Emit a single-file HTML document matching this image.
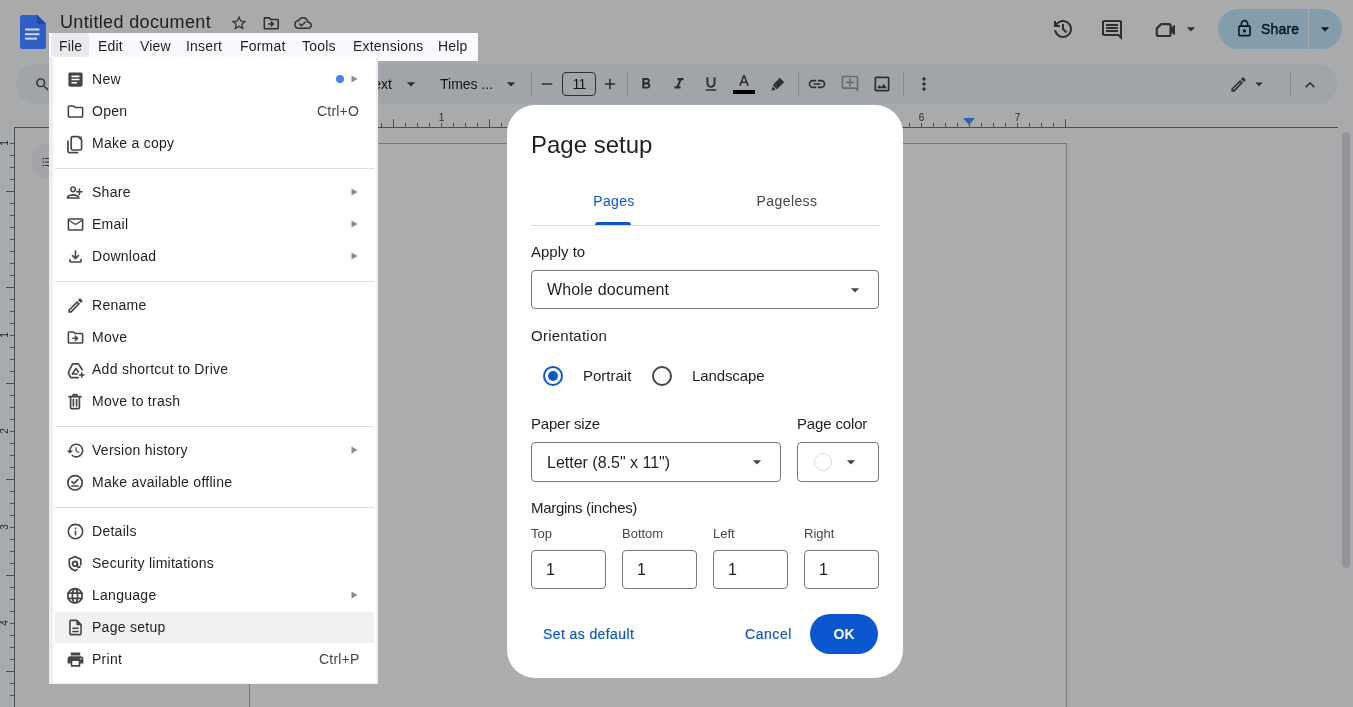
<!DOCTYPE html>
<html><head><meta charset="utf-8"><style>
*{margin:0;padding:0;box-sizing:border-box}
html,body{width:1353px;height:707px;overflow:hidden}
body{background:#f9fbfd;font-family:"Liberation Sans", sans-serif;position:relative}
.t{position:absolute;line-height:1;white-space:nowrap;will-change:transform}
.ic{position:absolute;display:block}
.abs{position:absolute}
</style></head><body>
<div class="t" style="left:60px;top:12.76px;font-size:18px;color:#303030;letter-spacing:0.35px;">Untitled document</div>
<svg class="ic" style="left:230px;top:13.5px;width:18px;height:18px;" viewBox="0 0 24 24"><path fill="#444746" d="M22 9.24l-7.19-.62L12 2 9.19 8.63 2 9.24l5.46 4.73L5.82 21 12 17.27 18.18 21l-1.63-7.03L22 9.24zM12 15.4l-3.76 2.27 1-4.28-3.32-2.88 4.38-.38L12 6.1l1.71 4.04 4.38.38-3.32 2.88 1 4.28L12 15.4z"/></svg>
<svg class="ic" style="left:262px;top:14px;width:18.5px;height:18.5px;" viewBox="0 0 24 24"><path fill="#444746" d="M20 6h-8l-2-2H4c-1.1 0-1.99.9-1.99 2L2 18c0 1.1.9 2 2 2h16c1.1 0 2-.9 2-2V8c0-1.1-.9-2-2-2zm0 12H4V6h5.17l2 2H20v10zm-7.84-6H8v2h4.16l-1.59 1.59L11.99 17 16 13.01 11.99 9l-1.41 1.41L12.16 12z"/></svg>
<svg class="ic" style="left:294px;top:13.8px;width:18px;height:18px;" viewBox="0 0 24 24"><path fill="#444746" d="M19.35 10.04C18.67 6.59 15.64 4 12 4 9.11 4 6.6 5.64 5.35 8.04 2.34 8.36 0 10.91 0 14c0 3.31 2.69 6 6 6h13c2.76 0 5-2.24 5-5 0-2.64-2.05-4.78-4.65-4.96zM19 18H6c-2.21 0-4-1.79-4-4 0-2.05 1.53-3.76 3.56-3.97l1.07-.11.5-.95C8.08 7.14 9.94 6 12 6c2.62 0 4.88 1.86 5.39 4.43l.3 1.5 1.53.11c1.56.1 2.78 1.41 2.78 2.96 0 1.65-1.35 3-3 3zm-9-3.82l-2.09-2.09L6.5 13.5 10 17l6.01-6.01-1.41-1.41z"/></svg>
<svg class="ic" style="left:1050.5px;top:16.5px;width:24px;height:24px" viewBox="0 -960 960 960"><path fill="#444746" d="M480-120q-138 0-240.5-91.5T122-440h82q14 104 92.5 172T480-200q117 0 198.5-81.5T760-480q0-117-81.5-198.5T480-760q-69 0-129 32t-101 88h110v80H120v-240h80v94q51-64 124.5-99T480-840q75 0 140.5 28.5t114 77q48.5 48.5 77 114T840-480q0 75-28.5 140.5t-77 114q-48.5 48.5-114 77T480-120Zm112-192L440-464v-216h80v184l128 128-56 56Z"/></svg>
<svg class="ic" style="left:1100px;top:18px;width:24px;height:24px;" viewBox="0 0 24 24"><path fill="#444746" d="M22 4c0-1.1-.9-2-2-2H4c-1.1 0-2 .9-2 2v12c0 1.1.9 2 2 2h14l4 4V4zm-2 13.17L18.83 16H4V4h16v13.17zM6 12h12v2H6zm0-3h12v2H6zm0-3h12v2H6z"/></svg>
<svg class="ic" style="left:1153px;top:17px;width:26px;height:26px" viewBox="0 0 24 24"><path fill="none" stroke="#444746" stroke-width="2" stroke-linejoin="round" d="M7.6 6.5H14.8Q16.2 6.5 16.2 7.9V16.1Q16.2 17.5 14.8 17.5H4.9Q3.5 17.5 3.5 16.1V10.6Z"/><path fill="#444746" d="M16 10.2L20.3 7.2V16.8L16 13.8Z"/></svg>
<svg class="ic" style="left:1181px;top:19px;width:20px;height:20px;" viewBox="0 0 24 24"><path fill="#444746" d="M7 10l5 5 5-5z"/></svg>
<div class="abs" style="left:1218px;top:9px;width:124px;height:40px;border-radius:20px;background:#c2e7ff"></div>
<div class="abs" style="left:1308px;top:9px;width:1px;height:40px;background:#f9fbfd"></div>
<svg class="ic" style="left:1234.5px;top:19px;width:19px;height:19px;" viewBox="0 0 24 24"><path fill="#0a2236" d="M18 8h-1V6c0-2.76-2.24-5-5-5S7 3.24 7 6v2H6c-1.1 0-2 .9-2 2v10c0 1.1.9 2 2 2h12c1.1 0 2-.9 2-2V10c0-1.1-.9-2-2-2zM9 6c0-1.66 1.34-3 3-3s3 1.34 3 3v2H9V6zm9 14H6V10h12v10zm-6-3c1.1 0 2-.9 2-2s-.9-2-2-2-2 .9-2 2 .9 2 2 2z"/></svg>
<div class="t" style="left:1261px;top:22.15px;font-size:14px;color:#0a2236;-webkit-text-stroke:0.45px #0a2236;letter-spacing:0.2px;">Share</div>
<svg class="ic" style="left:1315px;top:19px;width:20px;height:20px;" viewBox="0 0 24 24"><path fill="#001d35" d="M7 10l5 5 5-5z"/></svg>
<div class="abs" style="left:16px;top:63.5px;width:1321px;height:40px;border-radius:20px;background:#edf2f8"></div>
<svg class="ic" style="left:34.2px;top:76px;width:17px;height:17px;" viewBox="0 0 24 24"><path fill="#444746" d="M15.5 14h-.79l-.28-.27C15.41 12.59 16 11.11 16 9.5 16 5.91 13.09 3 9.5 3S3 5.91 3 9.5 5.91 16 9.5 16c1.61 0 3.09-.59 4.23-1.57l.27.28v.79l5 4.99L20.49 19l-4.99-5zm-6 0C7.01 14 5 11.99 5 9.5S7.01 5 9.5 5 14 7.01 14 9.5 11.99 14 9.5 14z"/></svg>
<div class="t" style="left:392px;top:77.15px;font-size:14px;color:#1f1f1f;transform:translateX(-100%);">ext</div>
<svg class="ic" style="left:401px;top:74px;width:20px;height:20px;" viewBox="0 0 24 24"><path fill="#444746" d="M7 10l5 5 5-5z"/></svg>
<div class="t" style="left:440px;top:77.15px;font-size:14px;color:#1f1f1f;">Times ...</div>
<svg class="ic" style="left:501px;top:74px;width:20px;height:20px;" viewBox="0 0 24 24"><path fill="#444746" d="M7 10l5 5 5-5z"/></svg>
<div class="abs" style="left:531px;top:72px;width:1px;height:24px;background:#c7c7c7"></div>
<svg class="ic" style="left:538px;top:75px;width:18px;height:18px;" viewBox="0 0 24 24"><path fill="#444746" d="M19 13H5v-2h14v2z"/></svg>
<div class="abs" style="left:562px;top:72px;width:34px;height:24px;border:1px solid #444746;border-radius:4px"></div>
<div class="t" style="left:579px;transform:translateX(-50%);top:77.15px;font-size:14px;color:#1f1f1f;letter-spacing:-0.8px;">11</div>
<svg class="ic" style="left:601px;top:75px;width:18px;height:18px;" viewBox="0 0 24 24"><path fill="#444746" d="M19 13h-6v6h-2v-6H5v-2h6V5h2v6h6v2z"/></svg>
<div class="abs" style="left:627px;top:72px;width:1px;height:24px;background:#c7c7c7"></div>
<svg class="ic" style="left:637px;top:75px;width:18px;height:18px;" viewBox="0 0 24 24"><path fill="#444746" d="M15.6 10.79c.97-.67 1.65-1.77 1.65-2.79 0-2.26-1.75-4-4-4H7v14h7.04c2.09 0 3.71-1.7 3.71-3.79 0-1.52-.86-2.82-2.15-3.42zM10 6.5h3c.83 0 1.5.67 1.5 1.5s-.67 1.5-1.5 1.5h-3v-3zm3.5 9H10v-3h3.5c.83 0 1.5.67 1.5 1.5s-.67 1.5-1.5 1.5z"/></svg>
<svg class="ic" style="left:670px;top:75px;width:18px;height:18px;" viewBox="0 0 24 24"><path fill="#444746" d="M10 4v3h2.21l-3.42 8H6v3h8v-3h-2.21l3.42-8H18V4z"/></svg>
<svg class="ic" style="left:702px;top:75px;width:18px;height:18px;" viewBox="0 0 24 24"><path fill="#444746" d="M12 17c3.31 0 6-2.69 6-6V3h-2.5v8c0 1.93-1.57 3.5-3.5 3.5S8.5 12.93 8.5 11V3H6v8c0 3.31 2.69 6 6 6zm-7 2v2h14v-2H5z"/></svg>
<svg class="ic" style="left:735px;top:73px;width:18px;height:18px;" viewBox="0 0 24 24"><path fill="#444746" d="M5.49 17h2.42l1.27-3.58h5.65L16.09 17h2.42L13.25 3h-2.5L5.49 17zm4.42-5.61l2.03-5.79h.12l2.03 5.79H9.91z"/></svg>
<div class="abs" style="left:733px;top:90px;width:22px;height:4px;background:#000"></div>
<svg class="ic" style="left:768px;top:74px;width:20px;height:20px" viewBox="0 0 24 24"><path fill="#444746" d="M14.2 4.6L19.4 9.8L12.6 16.6L7.4 11.4Z"/><path fill="#444746" d="M7.4 11.4L12.6 16.6L10.6 18.2L5.8 13.4Z"/><path fill="#444746" d="M5.8 15L9 18.2L7.6 19.6L4 19.8Z"/></svg>
<div class="abs" style="left:798px;top:72px;width:1px;height:24px;background:#c7c7c7"></div>
<svg class="ic" style="left:807px;top:74px;width:20px;height:20px;" viewBox="0 0 24 24"><path fill="#444746" d="M3.9 12c0-1.71 1.39-3.1 3.1-3.1h4V7H7c-2.76 0-5 2.24-5 5s2.24 5 5 5h4v-1.9H7c-1.71 0-3.1-1.39-3.1-3.1zM8 13h8v-2H8v2zm9-6h-4v1.9h4c1.71 0 3.1 1.39 3.1 3.1s-1.39 3.1-3.1 3.1h-4V17h4c2.76 0 5-2.24 5-5s-2.24-5-5-5z"/></svg>
<svg class="ic" style="left:840px;top:74px;width:20px;height:20px;" viewBox="0 0 24 24"><path fill="#9aa0a6" d="M22 4c0-1.1-.9-2-2-2H4c-1.1 0-1.99.9-1.99 2L2 16c0 1.1.9 2 2 2h14l4 4V4zm-2 13.17L18.83 16H4V4h16v13.17zM13 5h-2v4H7v2h4v4h2v-4h4V9h-4z"/></svg>
<svg class="ic" style="left:872px;top:74px;width:20px;height:20px;" viewBox="0 0 24 24"><path fill="#444746" d="M19 5v14H5V5h14m0-2H5c-1.1 0-2 .9-2 2v14c0 1.1.9 2 2 2h14c1.1 0 2-.9 2-2V5c0-1.1-.9-2-2-2zm-4.86 8.86l-3 3.87L9 13.14 6 17h12l-3.86-5.14z"/></svg>
<div class="abs" style="left:903px;top:72px;width:1px;height:24px;background:#c7c7c7"></div>
<svg class="ic" style="left:914px;top:74px;width:20px;height:20px;" viewBox="0 0 24 24"><path fill="#444746" d="M12 8c1.1 0 2-.9 2-2s-.9-2-2-2-2 .9-2 2 .9 2 2 2zm0 2c-1.1 0-2 .9-2 2s.9 2 2 2 2-.9 2-2-.9-2-2-2zm0 6c-1.1 0-2 .9-2 2s.9 2 2 2 2-.9 2-2-.9-2-2-2z"/></svg>
<div class="abs" style="left:1216px;top:66px;width:61px;height:36px;border-radius:18px;background:#f1f5fa"></div>
<svg class="ic" style="left:1229px;top:75px;width:19px;height:19px;" viewBox="0 0 24 24"><path fill="#444746" d="M3 17.25V21h3.75L17.81 9.94l-3.75-3.75L3 17.25zM5.92 19H5v-.92l9.06-9.06.92.92L5.92 19zM20.71 5.63l-2.34-2.34c-.2-.2-.45-.29-.71-.29s-.51.1-.7.29l-1.83 1.83 3.75 3.75 1.83-1.83c.39-.39.39-1.02 0-1.41z"/></svg>
<svg class="ic" style="left:1250px;top:75px;width:18px;height:18px;" viewBox="0 0 24 24"><path fill="#444746" d="M7 10l5 5 5-5z"/></svg>
<div class="abs" style="left:1290px;top:73px;width:1px;height:22px;background:#c7c7c7"></div>
<svg class="ic" style="left:1300px;top:75px;width:20px;height:20px;" viewBox="0 0 24 24"><path fill="#444746" d="M12 8l-6 6 1.41 1.41L12 10.83l4.59 4.58L18 14z"/></svg>
<svg class="ic" style="left:0;top:0;width:1353px;height:707px" viewBox="0 0 1353 707"><rect x="14" y="127" width="1324" height="1" fill="#70757a"/><rect x="14" y="127" width="1" height="580" fill="#70757a"/><rect x="249" y="123" width="1" height="4" fill="#70757a"/><rect x="261" y="123" width="1" height="4" fill="#70757a"/><rect x="273" y="123" width="1" height="4" fill="#70757a"/><rect x="285" y="123" width="1" height="4" fill="#70757a"/><rect x="297" y="119" width="1" height="8" fill="#70757a"/><rect x="309" y="123" width="1" height="4" fill="#70757a"/><rect x="321" y="123" width="1" height="4" fill="#70757a"/><rect x="333" y="123" width="1" height="4" fill="#70757a"/><rect x="345" y="123" width="1" height="4" fill="#70757a"/><rect x="357" y="123" width="1" height="4" fill="#70757a"/><rect x="369" y="123" width="1" height="4" fill="#70757a"/><rect x="381" y="123" width="1" height="4" fill="#70757a"/><rect x="393" y="119" width="1" height="8" fill="#70757a"/><rect x="405" y="123" width="1" height="4" fill="#70757a"/><rect x="417" y="123" width="1" height="4" fill="#70757a"/><rect x="429" y="123" width="1" height="4" fill="#70757a"/><rect x="441" y="123" width="1" height="4" fill="#70757a"/><rect x="453" y="123" width="1" height="4" fill="#70757a"/><rect x="465" y="123" width="1" height="4" fill="#70757a"/><rect x="477" y="123" width="1" height="4" fill="#70757a"/><rect x="489" y="119" width="1" height="8" fill="#70757a"/><rect x="501" y="123" width="1" height="4" fill="#70757a"/><rect x="513" y="123" width="1" height="4" fill="#70757a"/><rect x="525" y="123" width="1" height="4" fill="#70757a"/><rect x="537" y="123" width="1" height="4" fill="#70757a"/><rect x="549" y="123" width="1" height="4" fill="#70757a"/><rect x="561" y="123" width="1" height="4" fill="#70757a"/><rect x="573" y="123" width="1" height="4" fill="#70757a"/><rect x="585" y="119" width="1" height="8" fill="#70757a"/><rect x="597" y="123" width="1" height="4" fill="#70757a"/><rect x="609" y="123" width="1" height="4" fill="#70757a"/><rect x="621" y="123" width="1" height="4" fill="#70757a"/><rect x="633" y="123" width="1" height="4" fill="#70757a"/><rect x="645" y="123" width="1" height="4" fill="#70757a"/><rect x="657" y="123" width="1" height="4" fill="#70757a"/><rect x="669" y="123" width="1" height="4" fill="#70757a"/><rect x="681" y="119" width="1" height="8" fill="#70757a"/><rect x="693" y="123" width="1" height="4" fill="#70757a"/><rect x="705" y="123" width="1" height="4" fill="#70757a"/><rect x="717" y="123" width="1" height="4" fill="#70757a"/><rect x="729" y="123" width="1" height="4" fill="#70757a"/><rect x="741" y="123" width="1" height="4" fill="#70757a"/><rect x="753" y="123" width="1" height="4" fill="#70757a"/><rect x="765" y="123" width="1" height="4" fill="#70757a"/><rect x="777" y="119" width="1" height="8" fill="#70757a"/><rect x="789" y="123" width="1" height="4" fill="#70757a"/><rect x="801" y="123" width="1" height="4" fill="#70757a"/><rect x="813" y="123" width="1" height="4" fill="#70757a"/><rect x="825" y="123" width="1" height="4" fill="#70757a"/><rect x="837" y="123" width="1" height="4" fill="#70757a"/><rect x="849" y="123" width="1" height="4" fill="#70757a"/><rect x="861" y="123" width="1" height="4" fill="#70757a"/><rect x="873" y="119" width="1" height="8" fill="#70757a"/><rect x="885" y="123" width="1" height="4" fill="#70757a"/><rect x="897" y="123" width="1" height="4" fill="#70757a"/><rect x="909" y="123" width="1" height="4" fill="#70757a"/><rect x="921" y="123" width="1" height="4" fill="#70757a"/><rect x="933" y="123" width="1" height="4" fill="#70757a"/><rect x="945" y="123" width="1" height="4" fill="#70757a"/><rect x="957" y="123" width="1" height="4" fill="#70757a"/><rect x="969" y="119" width="1" height="8" fill="#70757a"/><rect x="981" y="123" width="1" height="4" fill="#70757a"/><rect x="993" y="123" width="1" height="4" fill="#70757a"/><rect x="1005" y="123" width="1" height="4" fill="#70757a"/><rect x="1017" y="123" width="1" height="4" fill="#70757a"/><rect x="1029" y="123" width="1" height="4" fill="#70757a"/><rect x="1041" y="123" width="1" height="4" fill="#70757a"/><rect x="1053" y="123" width="1" height="4" fill="#70757a"/><rect x="1065" y="119" width="1" height="8" fill="#70757a"/><rect x="1065" y="119" width="1" height="8" fill="#70757a"/><text x="441.5" y="121" font-size="10" text-anchor="middle" fill="#3c4043" font-family="Liberation Sans, sans-serif">1</text><text x="537.5" y="121" font-size="10" text-anchor="middle" fill="#3c4043" font-family="Liberation Sans, sans-serif">2</text><text x="633.5" y="121" font-size="10" text-anchor="middle" fill="#3c4043" font-family="Liberation Sans, sans-serif">3</text><text x="729.5" y="121" font-size="10" text-anchor="middle" fill="#3c4043" font-family="Liberation Sans, sans-serif">4</text><text x="825.5" y="121" font-size="10" text-anchor="middle" fill="#3c4043" font-family="Liberation Sans, sans-serif">5</text><text x="921.5" y="121" font-size="10" text-anchor="middle" fill="#3c4043" font-family="Liberation Sans, sans-serif">6</text><text x="1017.5" y="121" font-size="10" text-anchor="middle" fill="#3c4043" font-family="Liberation Sans, sans-serif">7</text><rect x="10" y="143" width="4" height="1" fill="#70757a"/><rect x="10" y="155" width="4" height="1" fill="#70757a"/><rect x="10" y="167" width="4" height="1" fill="#70757a"/><rect x="10" y="179" width="4" height="1" fill="#70757a"/><rect x="6" y="191" width="8" height="1" fill="#70757a"/><rect x="10" y="203" width="4" height="1" fill="#70757a"/><rect x="10" y="215" width="4" height="1" fill="#70757a"/><rect x="10" y="227" width="4" height="1" fill="#70757a"/><rect x="10" y="239" width="4" height="1" fill="#70757a"/><rect x="10" y="251" width="4" height="1" fill="#70757a"/><rect x="10" y="263" width="4" height="1" fill="#70757a"/><rect x="10" y="275" width="4" height="1" fill="#70757a"/><rect x="6" y="287" width="8" height="1" fill="#70757a"/><rect x="10" y="299" width="4" height="1" fill="#70757a"/><rect x="10" y="311" width="4" height="1" fill="#70757a"/><rect x="10" y="323" width="4" height="1" fill="#70757a"/><rect x="10" y="335" width="4" height="1" fill="#70757a"/><rect x="10" y="347" width="4" height="1" fill="#70757a"/><rect x="10" y="359" width="4" height="1" fill="#70757a"/><rect x="10" y="371" width="4" height="1" fill="#70757a"/><rect x="6" y="383" width="8" height="1" fill="#70757a"/><rect x="10" y="395" width="4" height="1" fill="#70757a"/><rect x="10" y="407" width="4" height="1" fill="#70757a"/><rect x="10" y="419" width="4" height="1" fill="#70757a"/><rect x="10" y="431" width="4" height="1" fill="#70757a"/><rect x="10" y="443" width="4" height="1" fill="#70757a"/><rect x="10" y="455" width="4" height="1" fill="#70757a"/><rect x="10" y="467" width="4" height="1" fill="#70757a"/><rect x="6" y="479" width="8" height="1" fill="#70757a"/><rect x="10" y="491" width="4" height="1" fill="#70757a"/><rect x="10" y="503" width="4" height="1" fill="#70757a"/><rect x="10" y="515" width="4" height="1" fill="#70757a"/><rect x="10" y="527" width="4" height="1" fill="#70757a"/><rect x="10" y="539" width="4" height="1" fill="#70757a"/><rect x="10" y="551" width="4" height="1" fill="#70757a"/><rect x="10" y="563" width="4" height="1" fill="#70757a"/><rect x="6" y="575" width="8" height="1" fill="#70757a"/><rect x="10" y="587" width="4" height="1" fill="#70757a"/><rect x="10" y="599" width="4" height="1" fill="#70757a"/><rect x="10" y="611" width="4" height="1" fill="#70757a"/><rect x="10" y="623" width="4" height="1" fill="#70757a"/><rect x="10" y="635" width="4" height="1" fill="#70757a"/><rect x="10" y="647" width="4" height="1" fill="#70757a"/><rect x="10" y="659" width="4" height="1" fill="#70757a"/><rect x="6" y="671" width="8" height="1" fill="#70757a"/><rect x="10" y="683" width="4" height="1" fill="#70757a"/><rect x="10" y="695" width="4" height="1" fill="#70757a"/><rect x="10" y="707" width="4" height="1" fill="#70757a"/><text x="0" y="0" font-size="10" text-anchor="middle" fill="#3c4043" font-family="Liberation Sans, sans-serif" transform="translate(8,143) rotate(-90)">1</text><text x="0" y="0" font-size="10" text-anchor="middle" fill="#3c4043" font-family="Liberation Sans, sans-serif" transform="translate(8,335) rotate(-90)">1</text><text x="0" y="0" font-size="10" text-anchor="middle" fill="#3c4043" font-family="Liberation Sans, sans-serif" transform="translate(8,431) rotate(-90)">2</text><text x="0" y="0" font-size="10" text-anchor="middle" fill="#3c4043" font-family="Liberation Sans, sans-serif" transform="translate(8,527) rotate(-90)">3</text><text x="0" y="0" font-size="10" text-anchor="middle" fill="#3c4043" font-family="Liberation Sans, sans-serif" transform="translate(8,623) rotate(-90)">4</text><path d="M963 118H975L969 125Z" fill="#4d8ff8"/></svg>
<div class="abs" style="left:249px;top:143px;width:818px;height:600px;background:#fff;border:1px solid #b0b0b0"></div>
<div class="abs" style="left:31px;top:143px;width:36px;height:36px;border-radius:18px;background:#f0f3f8"></div>
<svg class="ic" style="left:41px;top:155px;width:14px;height:14px;" viewBox="0 0 24 24"><path fill="#444746" d="M4 10.5c-.83 0-1.5.67-1.5 1.5s.67 1.5 1.5 1.5 1.5-.67 1.5-1.5-.67-1.5-1.5-1.5zm0-6c-.83 0-1.5.67-1.5 1.5S3.17 7.5 4 7.5 5.5 6.83 5.5 6 4.83 4.5 4 4.5zm0 12c-.83 0-1.5.68-1.5 1.5s.68 1.5 1.5 1.5 1.5-.68 1.5-1.5-.67-1.5-1.5-1.5zM7 19h14v-2H7v2zm0-6h14v-2H7v2zm0-8v2h14V5H7z"/></svg>
<div class="abs" style="left:1342px;top:132px;width:8px;height:436px;border-radius:4px;background:#dadce0"></div>
<div class="abs" style="left:0;top:0;width:1353px;height:707px;background:rgba(0,0,0,0.32)"></div>
<svg class="ic" style="left:20px;top:15px;width:26px;height:34px" viewBox="0 0 26 34"><path fill="#2f5fc6" d="M2.5 0H17.5L26 8.5V31.5Q26 34 23.5 34H2.5Q0 34 0 31.5V2.5Q0 0 2.5 0Z"/><path fill="#1f48a6" d="M17 0L26 9H19Q17 9 17 7Z"/><rect x="5" y="13.5" width="14.5" height="2" fill="#cdd9f2"/><rect x="5" y="18.2" width="14.5" height="2" fill="#cdd9f2"/><rect x="5" y="22.6" width="12" height="2" fill="#cdd9f2"/></svg>
<div class="abs" style="left:49px;top:33px;width:429px;height:28px;background:#f8fafd"></div>
<div class="abs" style="left:51px;top:33px;width:38px;height:24px;background:#e8eaed;border-radius:4px"></div>
<div class="t" style="left:59px;top:39.15px;font-size:14px;color:#1f1f1f;letter-spacing:0.2px;">File</div>
<div class="t" style="left:98px;top:39.15px;font-size:14px;color:#1f1f1f;letter-spacing:0.2px;">Edit</div>
<div class="t" style="left:139.6px;top:39.15px;font-size:14px;color:#1f1f1f;letter-spacing:0.2px;">View</div>
<div class="t" style="left:185.6px;top:39.15px;font-size:14px;color:#1f1f1f;letter-spacing:0.2px;">Insert</div>
<div class="t" style="left:239.7px;top:39.15px;font-size:14px;color:#1f1f1f;letter-spacing:0.2px;">Format</div>
<div class="t" style="left:302px;top:39.15px;font-size:14px;color:#1f1f1f;letter-spacing:0.2px;">Tools</div>
<div class="t" style="left:352.5px;top:39.15px;font-size:14px;color:#1f1f1f;letter-spacing:0.2px;">Extensions</div>
<div class="t" style="left:438px;top:39.15px;font-size:14px;color:#1f1f1f;letter-spacing:0.2px;">Help</div>
<div class="abs" style="left:49px;top:57px;width:329px;height:627px;background:#eceef0"></div>
<div class="abs" style="left:53px;top:57px;width:322.5px;height:626px;background:#fff"></div>
<div class="abs" style="left:55px;top:612px;width:319px;height:31px;background:#eff1f3"></div>
<svg class="ic" style="left:65.5px;top:69.5px;width:19px;height:19px;" viewBox="0 0 24 24"><path fill="#444746" d="M19 3H5c-1.1 0-2 .9-2 2v14c0 1.1.9 2 2 2h14c1.1 0 2-.9 2-2V5c0-1.1-.9-2-2-2zm-5 14H7v-2h7v2zm3-4H7v-2h10v2zm0-4H7V7h10v2z"/></svg>
<div class="t" style="left:92px;top:71.65px;font-size:14px;color:#1f1f1f;letter-spacing:0.27px;">New</div>
<svg class="ic" style="left:350px;top:75px;width:9px;height:8px" viewBox="0 0 9 8"><path d="M1.5 0.5L7.5 4L1.5 7.5Z" fill="#8a8a8a"/></svg>
<div class="abs" style="left:335.5px;top:74.5px;width:8px;height:8px;border-radius:4px;background:#4285f4"></div>
<svg class="ic" style="left:65.5px;top:101.5px;width:19px;height:19px;" viewBox="0 0 24 24"><path fill="#444746" d="M9.17 6l2 2H20v10H4V6h5.17M10 4H4c-1.1 0-1.99.9-1.99 2L2 18c0 1.1.9 2 2 2h16c1.1 0 2-.9 2-2V8c0-1.1-.9-2-2-2h-8l-2-2z"/></svg>
<div class="t" style="left:92px;top:103.65px;font-size:14px;color:#1f1f1f;letter-spacing:0.27px;">Open</div>
<div class="t" style="right:994px;top:103.65px;font-size:14px;color:#444746;letter-spacing:0.2px;">Ctrl+O</div>
<svg class="ic" style="left:62px;top:130px;width:26px;height:26px" viewBox="0 0 26 26"><path fill="none" stroke="#444746" stroke-width="1.7" stroke-linecap="round" stroke-linejoin="round" d="M9.2 8.2Q9.2 6.6 10.8 6.6H16.3L19.6 9.9V18.4Q19.6 20 18 20H10.8Q9.2 20 9.2 18.4Z"/><path fill="#444746" d="M16 6.6L19.6 10.2V6.6Z"/><path fill="none" stroke="#444746" stroke-width="1.7" stroke-linecap="round" stroke-linejoin="round" d="M6 11.2V21.2Q6 22.6 7.4 22.6H15.6"/></svg>
<div class="t" style="left:92px;top:135.65px;font-size:14px;color:#1f1f1f;letter-spacing:0.27px;">Make a copy</div>
<div class="abs" style="left:55px;top:168px;width:319px;height:1px;background:#dadce0"></div>
<svg class="ic" style="left:65.5px;top:182.5px;width:19px;height:19px;" viewBox="0 0 24 24"><path fill="#444746" d="M9 12c2.21 0 4-1.79 4-4s-1.79-4-4-4-4 1.79-4 4 1.79 4 4 4zm0-6c1.1 0 2 .9 2 2s-.9 2-2 2-2-.9-2-2 .9-2 2-2zm0 8c-2.67 0-8 1.34-8 4v2h16v-2c0-2.66-5.33-4-8-4zm-6 4c.22-.72 3.31-2 6-2 2.7 0 5.8 1.29 6 2H3zm15-3v-3h3v-2h-3V7h-2v3h-3v2h3v3z"/></svg>
<div class="t" style="left:92px;top:184.65px;font-size:14px;color:#1f1f1f;letter-spacing:0.27px;">Share</div>
<svg class="ic" style="left:350px;top:188px;width:9px;height:8px" viewBox="0 0 9 8"><path d="M1.5 0.5L7.5 4L1.5 7.5Z" fill="#8a8a8a"/></svg>
<svg class="ic" style="left:65.5px;top:214.5px;width:19px;height:19px;" viewBox="0 0 24 24"><path fill="#444746" d="M22 6c0-1.1-.9-2-2-2H4c-1.1 0-2 .9-2 2v12c0 1.1.9 2 2 2h16c1.1 0 2-.9 2-2V6zm-2 0l-8 5-8-5h16zm0 12H4V8l8 5 8-5v10z"/></svg>
<div class="t" style="left:92px;top:216.65px;font-size:14px;color:#1f1f1f;letter-spacing:0.27px;">Email</div>
<svg class="ic" style="left:350px;top:220px;width:9px;height:8px" viewBox="0 0 9 8"><path d="M1.5 0.5L7.5 4L1.5 7.5Z" fill="#8a8a8a"/></svg>
<svg class="ic" style="left:65.5px;top:246.5px;width:19px;height:19px;" viewBox="0 0 24 24"><path fill="#444746" d="M18 15v3H6v-3H4v3c0 1.1.9 2 2 2h12c1.1 0 2-.9 2-2v-3h-2zm-1-4l-1.41-1.41L13 12.17V4h-2v8.17L8.41 9.59 7 11l5 5 5-5z"/></svg>
<div class="t" style="left:92px;top:248.65px;font-size:14px;color:#1f1f1f;letter-spacing:0.27px;">Download</div>
<svg class="ic" style="left:350px;top:252px;width:9px;height:8px" viewBox="0 0 9 8"><path d="M1.5 0.5L7.5 4L1.5 7.5Z" fill="#8a8a8a"/></svg>
<div class="abs" style="left:55px;top:281px;width:319px;height:1px;background:#dadce0"></div>
<svg class="ic" style="left:65.5px;top:295.5px;width:19px;height:19px;" viewBox="0 0 24 24"><path fill="#444746" d="M3 17.25V21h3.75L17.81 9.94l-3.75-3.75L3 17.25zM5.92 19H5v-.92l9.06-9.06.92.92L5.92 19zM20.71 5.63l-2.34-2.34c-.2-.2-.45-.29-.71-.29s-.51.1-.7.29l-1.83 1.83 3.75 3.75 1.83-1.83c.39-.39.39-1.02 0-1.41z"/></svg>
<div class="t" style="left:92px;top:297.65px;font-size:14px;color:#1f1f1f;letter-spacing:0.27px;">Rename</div>
<svg class="ic" style="left:65.5px;top:327.5px;width:19px;height:19px;" viewBox="0 0 24 24"><path fill="#444746" d="M20 6h-8l-2-2H4c-1.1 0-1.99.9-1.99 2L2 18c0 1.1.9 2 2 2h16c1.1 0 2-.9 2-2V8c0-1.1-.9-2-2-2zm0 12H4V6h5.17l2 2H20v10zm-7.84-6H8v2h4.16l-1.59 1.59L11.99 17 16 13.01 11.99 9l-1.41 1.41L12.16 12z"/></svg>
<div class="t" style="left:92px;top:329.65px;font-size:14px;color:#1f1f1f;letter-spacing:0.27px;">Move</div>
<svg class="ic" style="left:62px;top:356px;width:26px;height:26px" viewBox="0 0 26 26"><path fill="none" stroke="#444746" stroke-width="1.7" stroke-linecap="round" stroke-linejoin="round" d="M20.2 13.8L17 8.6Q16.6 7.9 15.8 7.9H11.4Q10.6 7.9 10.2 8.6L6.5 16.1Q6.2 16.8 6.6 17.5L8.3 20.9Q8.7 21.7 9.5 21.7H16.2"/><path fill="none" stroke="#444746" stroke-width="1.7" stroke-linecap="round" stroke-linejoin="round" d="M10.4 18H15.2M10.4 18L14 12.4L16.3 16"/><path fill="#444746" d="M18.9 16.2h1.6v2h2v1.6h-2v2h-1.6v-2h-2v-1.6h2z"/></svg>
<div class="t" style="left:92px;top:361.65px;font-size:14px;color:#1f1f1f;letter-spacing:0.27px;">Add shortcut to Drive</div>
<svg class="ic" style="left:62px;top:388px;width:26px;height:26px" viewBox="0 0 26 26"><path fill="none" stroke="#444746" stroke-width="1.7" stroke-linecap="round" stroke-linejoin="round" d="M8.6 9.2V19.4Q8.6 20.6 9.8 20.6H16.2Q17.4 20.6 17.4 19.4V9.2M7 8.6H19M10.8 8.2L11.3 6.6H14.7L15.2 8.2M11.4 11.5V17.8M14.6 11.5V17.8"/></svg>
<div class="t" style="left:92px;top:393.65px;font-size:14px;color:#1f1f1f;letter-spacing:0.27px;">Move to trash</div>
<div class="abs" style="left:55px;top:426px;width:319px;height:1px;background:#dadce0"></div>
<svg class="ic" style="left:65.5px;top:440.5px;width:19px;height:19px;" viewBox="0 0 24 24"><path fill="#444746" d="M13 3c-4.97 0-9 4.03-9 9H1l3.89 3.89.07.14L9 12H6c0-3.87 3.13-7 7-7s7 3.13 7 7-3.13 7-7 7c-1.93 0-3.68-.79-4.94-2.06l-1.42 1.42C8.27 19.99 10.51 21 13 21c4.97 0 9-4.03 9-9s-4.03-9-9-9zm-1 5v5l4.28 2.54.72-1.21-3.5-2.08V8H12z"/></svg>
<div class="t" style="left:92px;top:442.65px;font-size:14px;color:#1f1f1f;letter-spacing:0.27px;">Version history</div>
<svg class="ic" style="left:350px;top:446px;width:9px;height:8px" viewBox="0 0 9 8"><path d="M1.5 0.5L7.5 4L1.5 7.5Z" fill="#8a8a8a"/></svg>
<svg class="ic" style="left:62px;top:469px;width:26px;height:26px" viewBox="0 0 26 26"><circle cx="13" cy="13.8" r="7.2" fill="none" stroke="#444746" stroke-width="1.7" stroke-linecap="round" stroke-linejoin="round"/><path fill="none" stroke="#444746" stroke-width="1.7" stroke-linecap="round" stroke-linejoin="round" d="M10 12.6L11.9 14.5L15.8 10.6M10 17H16"/></svg>
<div class="t" style="left:92px;top:474.65px;font-size:14px;color:#1f1f1f;letter-spacing:0.27px;">Make available offline</div>
<div class="abs" style="left:55px;top:507px;width:319px;height:1px;background:#dadce0"></div>
<svg class="ic" style="left:65.5px;top:521.5px;width:19px;height:19px;" viewBox="0 0 24 24"><path fill="#444746" d="M11 7h2v2h-2zm0 4h2v6h-2zm1-9C6.48 2 2 6.48 2 12s4.48 10 10 10 10-4.48 10-10S17.52 2 12 2zm0 18c-4.41 0-8-3.59-8-8s3.59-8 8-8 8 3.59 8 8-3.59 8-8 8z"/></svg>
<div class="t" style="left:92px;top:523.65px;font-size:14px;color:#1f1f1f;letter-spacing:0.27px;">Details</div>
<svg class="ic" style="left:62px;top:550px;width:26px;height:26px" viewBox="0 0 26 26"><path fill="none" stroke="#444746" stroke-width="1.7" stroke-linecap="round" stroke-linejoin="round" d="M18.8 14.6V9.2L13 6.6L7.3 9.2V14.2Q7.5 18.6 13 20.6Q14.2 20.2 15 19.6"/><circle cx="13" cy="13.7" r="2.4" fill="none" stroke="#444746" stroke-width="1.7" stroke-linecap="round" stroke-linejoin="round"/><path fill="none" stroke="#444746" stroke-width="1.7" stroke-linecap="round" stroke-linejoin="round" d="M15.4 13.7V16.2Q15.4 17.4 16.6 17.4Q17.6 17.4 17.9 16.4"/></svg>
<div class="t" style="left:92px;top:555.65px;font-size:14px;color:#1f1f1f;letter-spacing:0.27px;">Security limitations</div>
<svg class="ic" style="left:62px;top:582px;width:26px;height:26px" viewBox="0 0 26 26"><circle cx="13" cy="13.8" r="7.2" fill="none" stroke="#444746" stroke-width="1.7" stroke-linecap="round" stroke-linejoin="round"/><path fill="none" stroke="#444746" stroke-width="1.7" stroke-linecap="round" stroke-linejoin="round" d="M6.2 11.2H19.8M6.2 16.4H19.8"/><ellipse cx="13" cy="13.8" rx="2.6" ry="7.2" fill="none" stroke="#444746" stroke-width="1.7" stroke-linecap="round" stroke-linejoin="round"/></svg>
<div class="t" style="left:92px;top:587.65px;font-size:14px;color:#1f1f1f;letter-spacing:0.27px;">Language</div>
<svg class="ic" style="left:350px;top:591px;width:9px;height:8px" viewBox="0 0 9 8"><path d="M1.5 0.5L7.5 4L1.5 7.5Z" fill="#8a8a8a"/></svg>
<svg class="ic" style="left:65.5px;top:617.5px;width:19px;height:19px;" viewBox="0 0 24 24"><path fill="#444746" d="M8 16h8v2H8zm0-4h8v2H8zm6-10H6c-1.1 0-2 .9-2 2v16c0 1.1.89 2 1.99 2H18c1.1 0 2-.9 2-2V8l-6-6zm4 18H6V4h7v5h5v11z"/></svg>
<div class="t" style="left:92px;top:619.65px;font-size:14px;color:#1f1f1f;letter-spacing:0.27px;">Page setup</div>
<svg class="ic" style="left:65.5px;top:649.5px;width:19px;height:19px;" viewBox="0 0 24 24"><path fill="#444746" d="M19 8H5c-1.66 0-3 1.34-3 3v6h4v4h12v-4h4v-6c0-1.66-1.34-3-3-3zm-3 11H8v-5h8v5zm3-7c-.55 0-1-.45-1-1s.45-1 1-1 1 .45 1 1-.45 1-1 1zm-1-9H6v4h12V3z"/></svg>
<div class="t" style="left:92px;top:651.65px;font-size:14px;color:#1f1f1f;letter-spacing:0.27px;">Print</div>
<div class="t" style="right:994px;top:651.65px;font-size:14px;color:#444746;letter-spacing:0.2px;">Ctrl+P</div>
<div class="abs" style="left:507px;top:105px;width:396px;height:573px;border-radius:28px;background:#fff"></div>
<div class="t" style="left:531px;top:133.18px;font-size:24px;color:#1f1f1f;">Page setup</div>
<div class="t" style="left:613.5px;transform:translateX(-50%);top:194.15px;font-size:14px;color:#0b57d0;letter-spacing:0.35px;">Pages</div>
<div class="t" style="left:787px;transform:translateX(-50%);top:194.15px;font-size:14px;color:#444746;letter-spacing:0.4px;">Pageless</div>
<div class="abs" style="left:531px;top:225px;width:348px;height:1px;background:#dadce0"></div>
<div class="abs" style="left:595px;top:222px;width:36px;height:3px;border-radius:3px 3px 0 0;background:#0b57d0"></div>
<div class="t" style="left:531px;top:244.30px;font-size:15px;color:#1f1f1f;">Apply to</div>
<div class="abs" style="left:531px;top:270px;width:348px;height:39px;border:1px solid #747775;border-radius:4px"></div>
<div class="t" style="left:547px;top:282.46px;font-size:16px;color:#1f1f1f;letter-spacing:0.15px;">Whole document</div>
<svg class="ic" style="left:845px;top:280px;width:20px;height:20px;" viewBox="0 0 24 24"><path fill="#444746" d="M7 10l5 5 5-5z"/></svg>
<div class="t" style="left:531px;top:328.30px;font-size:15px;color:#1f1f1f;letter-spacing:0.25px;">Orientation</div>
<div class="abs" style="left:543px;top:366px;width:20px;height:20px;border-radius:10px;border:2px solid #0b57d0"></div>
<div class="abs" style="left:548px;top:371px;width:10px;height:10px;border-radius:5px;background:#0b57d0"></div>
<div class="t" style="left:583px;top:368.30px;font-size:15px;color:#1f1f1f;">Portrait</div>
<div class="abs" style="left:652px;top:366px;width:20px;height:20px;border-radius:10px;border:2px solid #444746"></div>
<div class="t" style="left:692px;top:368.30px;font-size:15px;color:#1f1f1f;letter-spacing:-0.1px;">Landscape</div>
<div class="t" style="left:531px;top:416.30px;font-size:15px;color:#1f1f1f;letter-spacing:-0.2px;">Paper size</div>
<div class="t" style="left:797px;top:416.30px;font-size:15px;color:#1f1f1f;letter-spacing:-0.15px;">Page color</div>
<div class="abs" style="left:531px;top:442px;width:250px;height:40px;border:1px solid #747775;border-radius:4px"></div>
<div class="t" style="left:547px;top:454.96px;font-size:16px;color:#1f1f1f;">Letter (8.5" x 11")</div>
<svg class="ic" style="left:747px;top:452px;width:20px;height:20px;" viewBox="0 0 24 24"><path fill="#444746" d="M7 10l5 5 5-5z"/></svg>
<div class="abs" style="left:797px;top:442px;width:82px;height:40px;border:1px solid #747775;border-radius:4px"></div>
<div class="abs" style="left:813.5px;top:453px;width:18px;height:18px;border-radius:9px;border:1px solid #dadce0"></div>
<svg class="ic" style="left:841px;top:452px;width:20px;height:20px;" viewBox="0 0 24 24"><path fill="#444746" d="M7 10l5 5 5-5z"/></svg>
<div class="t" style="left:531px;top:500.30px;font-size:15px;color:#1f1f1f;letter-spacing:-0.3px;">Margins (inches)</div>
<div class="t" style="left:531px;top:527.00px;font-size:13px;color:#444746;">Top</div>
<div class="abs" style="left:531px;top:550px;width:75px;height:39px;border:1px solid #747775;border-radius:4px"></div>
<div class="t" style="left:545.5px;top:562.46px;font-size:16px;color:#1f1f1f;">1</div>
<div class="t" style="left:622px;top:527.00px;font-size:13px;color:#444746;">Bottom</div>
<div class="abs" style="left:622px;top:550px;width:75px;height:39px;border:1px solid #747775;border-radius:4px"></div>
<div class="t" style="left:636.5px;top:562.46px;font-size:16px;color:#1f1f1f;">1</div>
<div class="t" style="left:713px;top:527.00px;font-size:13px;color:#444746;">Left</div>
<div class="abs" style="left:713px;top:550px;width:75px;height:39px;border:1px solid #747775;border-radius:4px"></div>
<div class="t" style="left:727.5px;top:562.46px;font-size:16px;color:#1f1f1f;">1</div>
<div class="t" style="left:804px;top:527.00px;font-size:13px;color:#444746;">Right</div>
<div class="abs" style="left:804px;top:550px;width:75px;height:39px;border:1px solid #747775;border-radius:4px"></div>
<div class="t" style="left:818.5px;top:562.46px;font-size:16px;color:#1f1f1f;">1</div>
<div class="t" style="left:543.4px;top:627.15px;font-size:14px;color:#0b57d0;letter-spacing:0.4px;-webkit-text-stroke:0.2px #0b57d0;">Set as default</div>
<div class="t" style="left:745px;top:627.15px;font-size:14px;color:#0b57d0;letter-spacing:0.55px;-webkit-text-stroke:0.2px #0b57d0;">Cancel</div>
<div class="abs" style="left:810px;top:614px;width:68px;height:40px;border-radius:20px;background:#0b57d0"></div>
<div class="t" style="left:844px;transform:translateX(-50%);top:627.15px;font-size:14px;color:#fff;font-weight:bold;">OK</div>
</body></html>
